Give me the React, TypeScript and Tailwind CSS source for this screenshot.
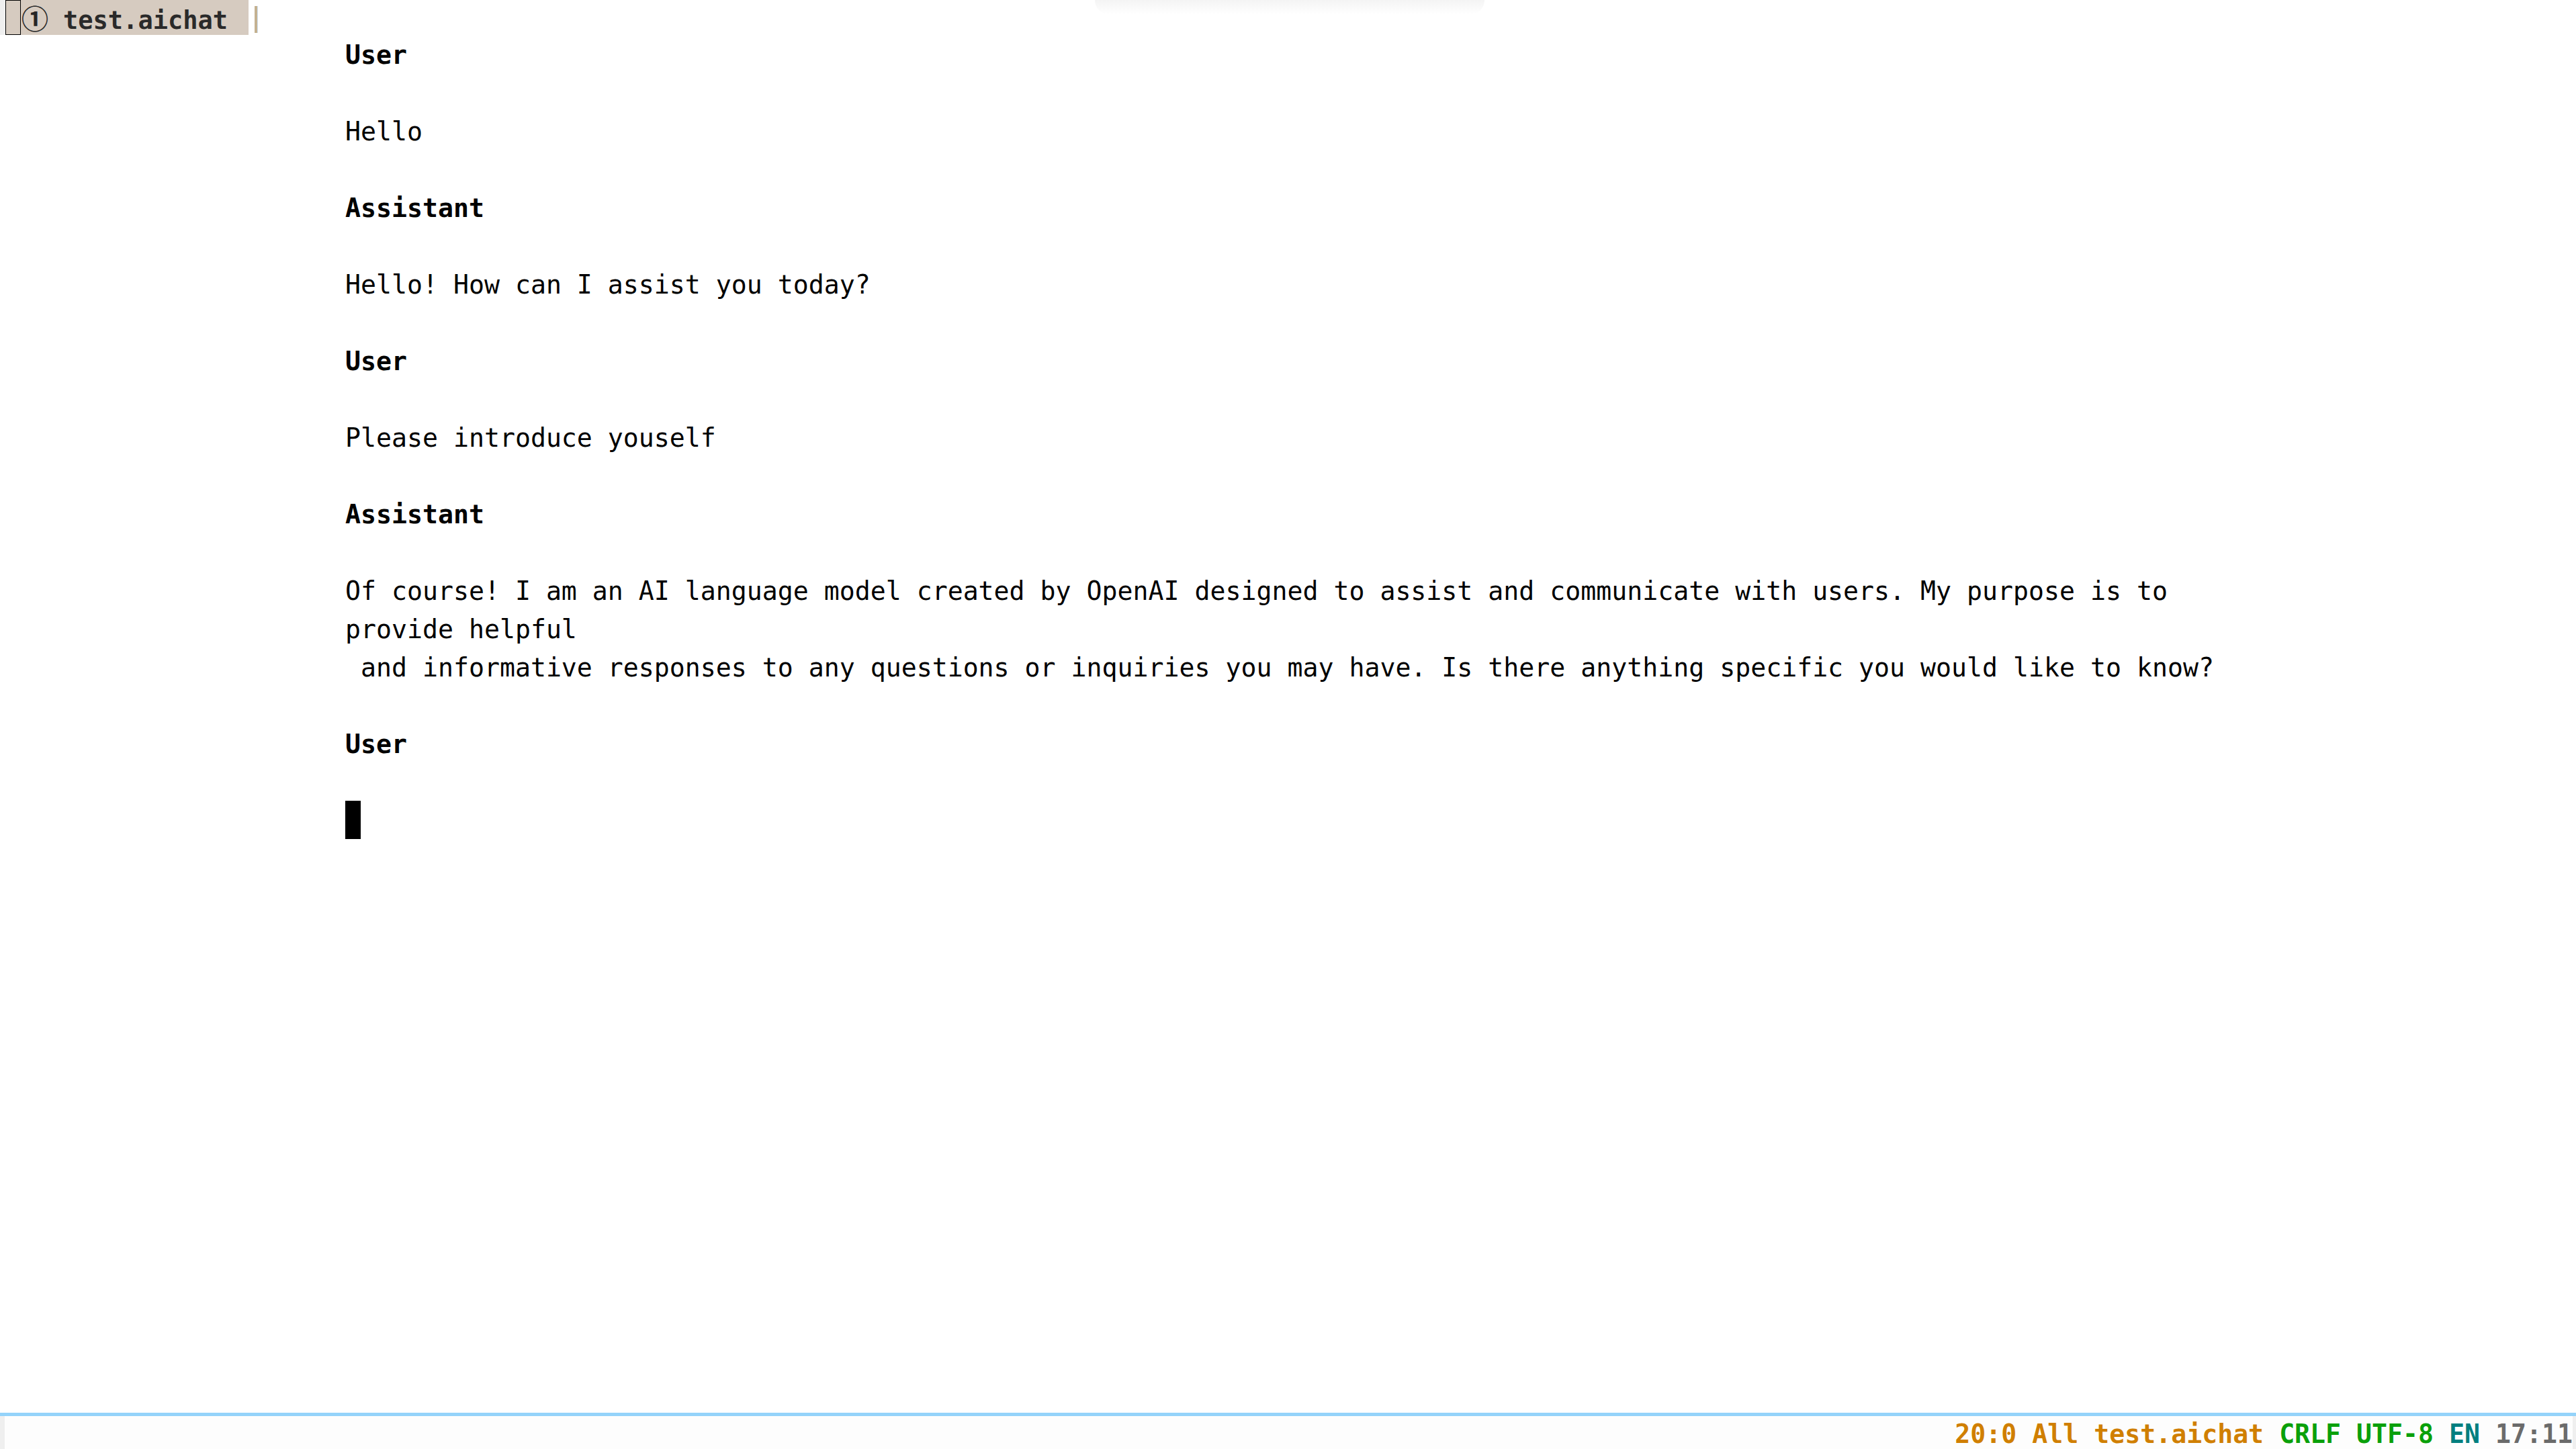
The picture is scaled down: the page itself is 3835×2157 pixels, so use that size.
const mono = "font-['DejaVu_Sans_Mono','Liberation_Mono','Noto_Sans_CJK_SC',monospace]";

const lines: { text: string; bold?: boolean }[] = [
  { text: "User", bold: true },
  { text: "" },
  { text: "Hello" },
  { text: "" },
  { text: "Assistant", bold: true },
  { text: "" },
  { text: "Hello! How can I assist you today?" },
  { text: "" },
  { text: "User", bold: true },
  { text: "" },
  { text: "Please introduce youself" },
  { text: "" },
  { text: "Assistant", bold: true },
  { text: "" },
  {
    text: "Of course! I am an AI language model created by OpenAI designed to assist and communicate with users. My purpose is to",
  },
  { text: "provide helpful" },
  {
    text: " and informative responses to any questions or inquiries you may have. Is there anything specific you would like to know?",
  },
  { text: "" },
  { text: "User", bold: true },
  { text: "" },
];

const App = () => {
  return (
    <div className={`relative flex h-screen w-full flex-col bg-white text-black ${mono}`}>
      {/* faint window shadow at the top */}
      <div className="pointer-events-none absolute left-[1630px] top-0 h-[22px] w-[580px] rounded-b-[40px] bg-gradient-to-b from-[#f4f4f4] to-transparent" />

      {/* tab bar */}
      <div className="flex h-[52px] items-stretch">
        <div className="w-[8px] bg-[#efefef]" />
        <div className="flex w-[362px] items-center bg-[#d6cbc0]">
          <div className="h-[52px] w-[23px] border border-black" />
          <span className="mt-[6px] w-[42px] text-center text-[40px] font-bold leading-none text-[#262626]">
            ①
          </span>
          <span className="ml-[21px] mt-[8px] text-[37px] font-bold leading-none text-[#2a2a2a]">
            test.aichat
          </span>
        </div>
        <div className="ml-[9px] mt-[9px] h-[40px] w-[5px] border-r border-[#cfe3f7] bg-[#c4b190]" />
      </div>

      {/* buffer */}
      <div className="flex-1 pl-[514px] text-[38.2px] leading-[57px]">
        {lines.map((l, i) => (
          <div key={i} className={`h-[57px] pt-[2px] whitespace-pre ${l.bold ? "font-bold" : ""}`}>
            {l.text}
          </div>
        ))}
        <div className="h-[57px]">
          <div className="h-[57px] w-[23px] bg-black" />
        </div>
      </div>

      {/* mode line */}
      <div className="h-[5px] bg-[#94d3fa]" />
      <div className="flex h-[49px] items-center bg-[#fdfdfd]">
        <div className="h-full w-[7px] bg-[#efefef]" />
        <div className="flex flex-1 justify-end gap-[23px] pt-[6px] text-[38.2px] font-bold leading-none whitespace-pre">
          <span className="text-[#d07f00]">20:0 All test.aichat</span>
          <span className="text-[#0aa00a]">CRLF UTF-8</span>
          <span className="text-[#007f7f]">EN</span>
          <span className="text-[#6b6b6b]">17:11</span>
        </div>
        <div className="h-full w-[5px] bg-[#efefef]" />
      </div>
    </div>
  );
};

export default App;
